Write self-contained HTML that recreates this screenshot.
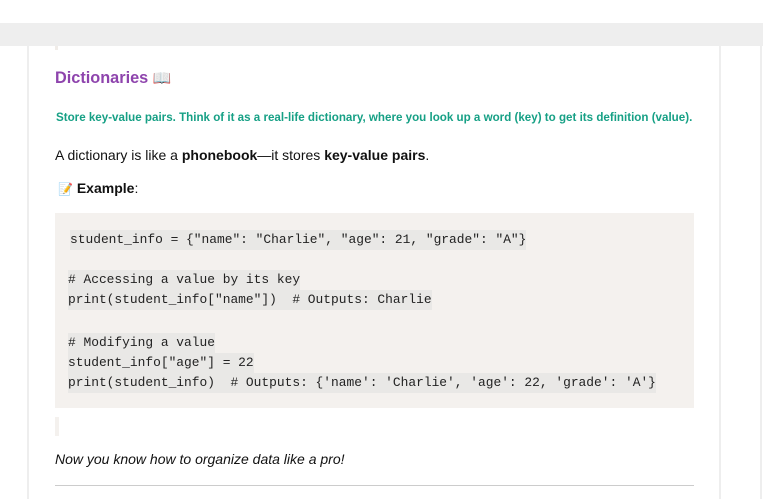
<!DOCTYPE html>
<html><head><meta charset="utf-8"><style>
body{margin:0;width:763px;height:499px;overflow:hidden;background:#fff;font-family:"Liberation Sans",Arial,sans-serif;position:relative}
.a{position:absolute;white-space:nowrap}
.band{position:absolute;left:0;top:23px;width:763px;height:23px;background:#eeeeee}
.vl{position:absolute;top:46px;height:453px;width:2px;background:#eeeeee}
.code{position:absolute;left:55px;top:213px;width:639px;height:195px;background:#f4f1ee}
.cl{position:absolute;font-family:"Liberation Mono",monospace;font-size:12.9px;line-height:20px;height:20px;background:#e9e8e6;color:#222;white-space:pre}
</style></head><body>
<div class="band"></div>
<div class="vl" style="left:27px"></div>
<div class="vl" style="left:719px"></div>
<div class="vl" style="left:760px"></div>
<div class="a" style="left:55px;top:46px;width:3px;height:4px;background:#f0ece8"></div>
<div class="a" style="left:55px;top:69px;font-size:16.3px;font-weight:bold;color:#8e44ad">Dictionaries <span style="font-size:15px">📖</span></div>
<div class="a" style="left:56px;top:111px;font-size:11.6px;font-weight:bold;color:#16a085">Store key-value pairs. Think of it as a real-life dictionary, where you look up a word (key) to get its definition (value).</div>
<div class="a" style="left:55px;top:147px;font-size:14px;color:#111">A dictionary is like a <b>phonebook</b>—it stores <b>key-value pairs</b>.</div>
<div class="a" style="left:58px;top:180px;font-size:14px;color:#111"><span style="font-size:12px">📝</span> <b>Example</b>:</div>
<div class="code"></div>
<div class="cl" style="left:70px;top:230px">student_info = {"name": "Charlie", "age": 21, "grade": "A"}</div>
<div class="cl" style="left:68px;top:270px"># Accessing a value by its key</div>
<div class="cl" style="left:68px;top:290px">print(student_info["name"])  # Outputs: Charlie</div>
<div class="cl" style="left:68px;top:333px"># Modifying a value</div>
<div class="cl" style="left:68px;top:353px">student_info["age"] = 22</div>
<div class="cl" style="left:68px;top:373px">print(student_info)  # Outputs: {'name': 'Charlie', 'age': 22, 'grade': 'A'}</div>
<div class="a" style="left:55px;top:417px;width:4px;height:19px;background:#f4f1ee"></div>
<div class="a" style="left:55px;top:451px;font-size:14px;font-style:italic;color:#111">Now you know how to organize data like a pro!</div>
<div class="a" style="left:55px;top:485px;width:639px;height:1px;background:#cccccc"></div>
</body></html>
